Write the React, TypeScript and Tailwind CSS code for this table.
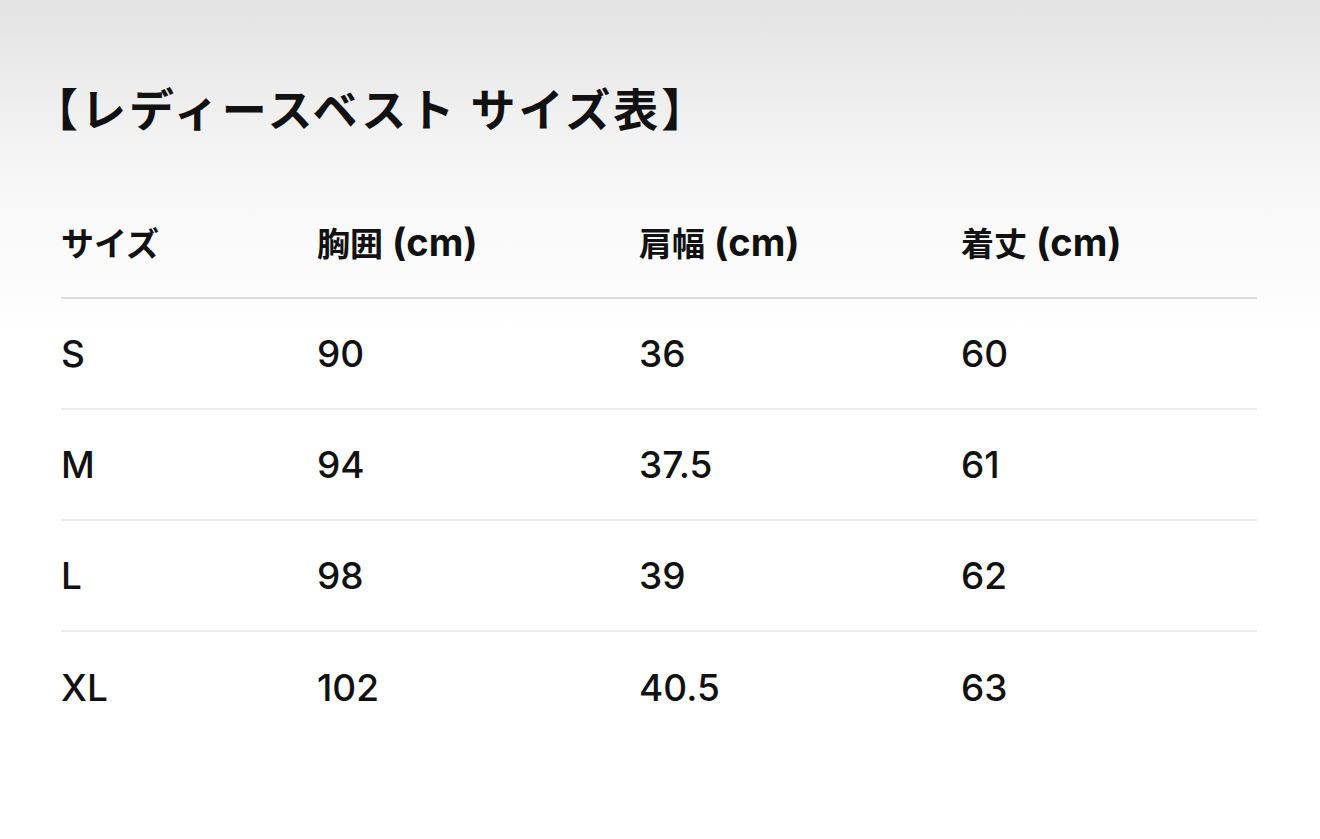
const rows = [
  { size: 'S', chest: '90', shoulder: '36', length: '60' },
  { size: 'M', chest: '94', shoulder: '37.5', length: '61' },
  { size: 'L', chest: '98', shoulder: '39', length: '62' },
  { size: 'XL', chest: '102', shoulder: '40.5', length: '63' },
]

const cols = 'grid grid-cols-[256px_322px_322px_1fr] items-center'

function HeadCell({ jp, unit }: { jp: string; unit?: string }) {
  return (
    <div className="whitespace-nowrap text-[#111] font-bold">
      <span className="text-[33px] font-['Noto_Sans_CJK_JP',sans-serif]">{jp}</span>
      {unit && <span className="text-[38px] font-['Inter','Noto_Sans_CJK_JP',sans-serif]"> {unit}</span>}
    </div>
  )
}

export default function App() {
  return (
    <div className="min-h-[839px] w-full bg-linear-to-b from-[#e3e3e3] via-[#f6f6f6] via-20% to-white to-40%">
      <div className="pl-[61px] pr-[63px] pt-[78px]">
        <h1 className="-ml-[28px] h-[60px] leading-[60px] text-[45px] tracking-[3px] font-bold text-[#111] font-['Noto_Sans_CJK_JP',sans-serif]">
          【レディースベスト サイズ表】
        </h1>

        <div className="mt-[50px]">
          <div className={`${cols} h-[111px] border-b-2 border-[#dedede]`}>
            <HeadCell jp="サイズ" />
            <HeadCell jp="胸囲" unit="(cm)" />
            <HeadCell jp="肩幅" unit="(cm)" />
            <HeadCell jp="着丈" unit="(cm)" />
          </div>

          {rows.map((r, i) => (
            <div
              key={r.size}
              className={`${cols} h-[111px] text-[37px] font-medium text-[#111] font-['Inter',sans-serif] ${
                i < rows.length - 1 ? 'border-b-2 border-[#ececec]' : ''
              }`}
            >
              <div>{r.size}</div>
              <div>{r.chest}</div>
              <div>{r.shoulder}</div>
              <div>{r.length}</div>
            </div>
          ))}
        </div>
      </div>
    </div>
  )
}
